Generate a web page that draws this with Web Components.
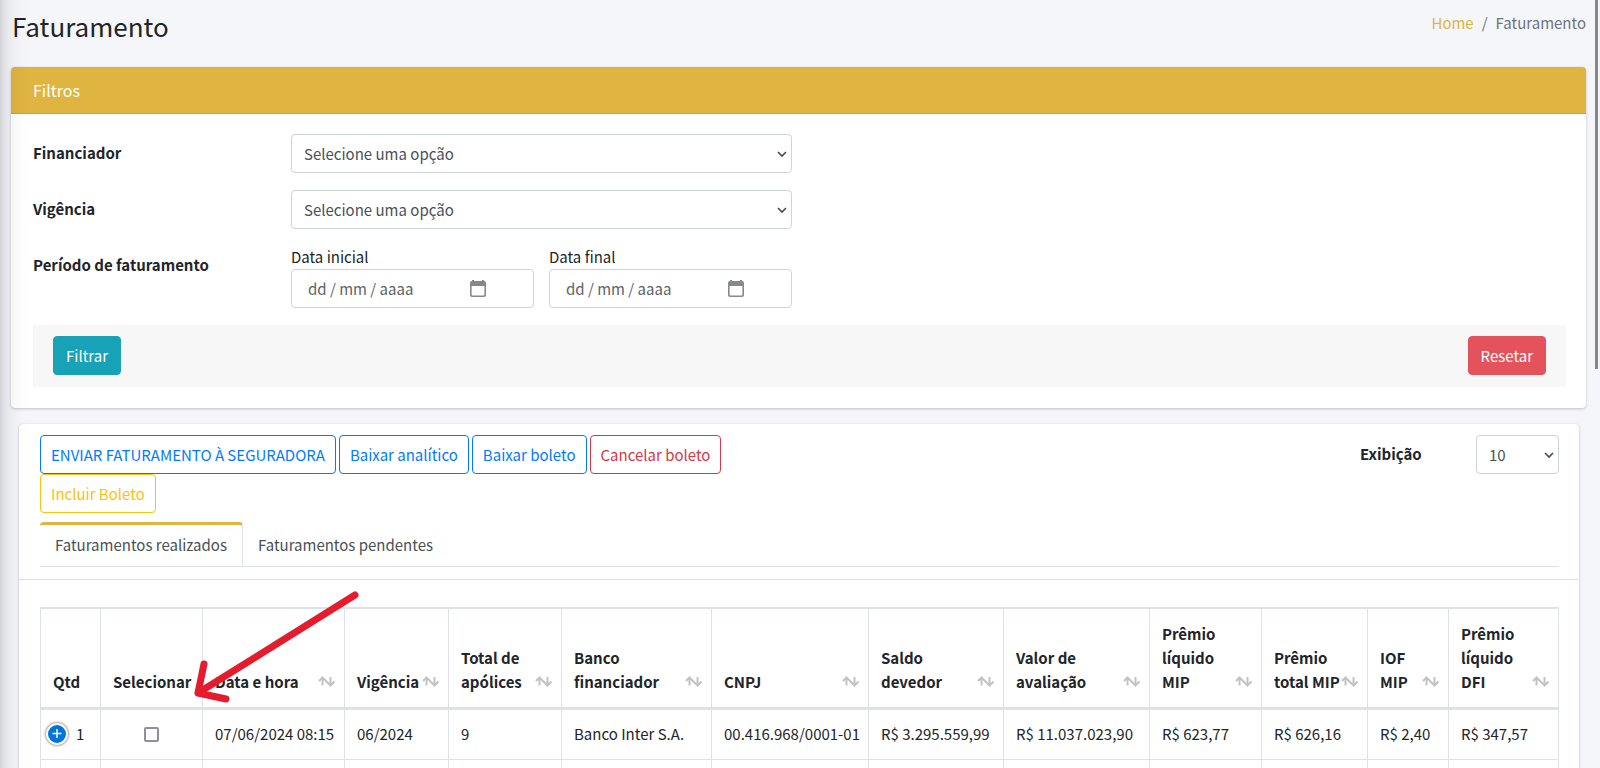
<!DOCTYPE html>
<html lang="pt-BR">
<head>
<meta charset="utf-8">
<title>Faturamento</title>
<style>
  html { scrollbar-width: none; }
  body {
    margin: 0;
    background: #f4f6f9;
    color: #212529;
    font-family: "Noto Sans CJK SC", "Noto Sans", sans-serif;
    font-size: 15px;
    line-height: 24px;
    overflow-x: hidden;
  }
</style>
</head>
<body>
<billing-page></billing-page>

<script>
  const define = (name, html, setup) => {
    const template = document.createElement('template');
    template.innerHTML = '<style>*,*::before,*::after{box-sizing:border-box}</style>' + html;
    customElements.define(name, class extends HTMLElement {
      connectedCallback() {
        if (this.shadowRoot) return;
        const root = this.attachShadow({ mode: 'open' });
        root.append(template.content.cloneNode(true));
        if (setup) setup(this, root);
      }
    });
  };

  /* Page heading with breadcrumb */
  define('page-header', `
    <style>
      :host { display: flex; justify-content: space-between; align-items: flex-start; padding: 6px 14px 21px 12px; }
      h1 { margin: 0; font-size: 26px; line-height: 40px; font-weight: 400; }
      ol { display: flex; margin: 0; padding: 5px 0 0; list-style: none; color: #6c757d; }
      li + li::before { content: "/"; padding: 0 8px; }
      a { color: #e0b440; text-decoration: none; }
    </style>
    <h1>Faturamento</h1>
    <nav aria-label="breadcrumb"><ol><li><a href="#home">Home</a></li><li>Faturamento</li></ol></nav>`);

  /* White raised panel */
  define('ui-card', `
    <style>
      :host { display: block; background: #fff; border-radius: 4px; box-shadow: 0 0 1px rgba(0,0,0,.13), 0 1px 3px rgba(0,0,0,.2); }
      ::slotted([slot=title]) { display: block; margin: 0; padding: 11px 22px 10px; border-bottom: 1px solid #caa23a; border-radius: 4px 4px 0 0; background: #e0b440; color: #fff; font-size: 16px; line-height: 25px; font-weight: 400; }
    </style>
    <slot name="title"></slot><slot></slot>`);

  /* Button variants */
  define('ui-button', `
    <style>
      :host { display: inline-block; --c: #007bff; }
      button { display: block; height: 39px; padding: 0 10px; border: 1px solid var(--c); border-radius: 4px; background: transparent; color: var(--c); font: inherit; white-space: nowrap; cursor: pointer; }
      :host([variant=danger]) { --c: #dc3545; }
      :host([variant=warning]) { --c: #ffc107; }
      :host([variant=info]) { --c: #17a2b8; }
      :host([variant=reset]) { --c: #e4535b; }
      :host([solid]) button { padding: 0 12px; background: var(--c); color: #fff; }
    </style>
    <button type="button"><slot></slot></button>`);

  /* Drop-down with its label */
  define('select-field', `
    <style>
      :host { display: grid; grid-template-columns: 2fr 4fr 6fr; }
      :host([compact]) { grid-template-columns: 116px 83px; }
      label { padding-top: 7px; font-weight: 700; }
      .box { display: grid; align-items: center; margin-right: 15px; }
      :host([compact]) .box { margin-right: 0; }
      select, svg { grid-area: 1 / 1; }
      select { appearance: none; width: 100%; height: 39px; padding: 0 12px; border: 1px solid #ced4da; border-radius: 4px; background: #fff; color: #495057; font: inherit; }
      svg { justify-self: end; margin-right: 5px; pointer-events: none; }
    </style>
    <label for="s"></label>
    <div class="box">
      <select id="s"><option></option></select>
      <svg width="10" height="8" viewBox="0 0 10 8" fill="none" stroke="#495057" stroke-width="1.700"><path d="M1 2 5 6 9 2"/></svg>
    </div>`, (el, root) => {
      root.querySelector('label').textContent = el.getAttribute('label');
      root.querySelector('option').textContent = el.getAttribute('value');
    });

  /* Date box with calendar glyph */
  define('date-field', `
    <style>
      :host { display: block; flex: 1; min-width: 0; }
      label { display: block; }
      .box { display: flex; align-items: center; height: 39px; padding: 0 46px 0 16px; border: 1px solid #ced4da; border-radius: 4px; }
      input { flex: 1; min-width: 0; padding: 0; border: 0; outline: 0; background: none; color: #495057; font: inherit; }
      input::placeholder { color: #5c636a; opacity: 1; }
      svg { display: block; }
    </style>
    <label for="d"><slot></slot></label>
    <div class="box">
      <input id="d" type="text" placeholder="dd / mm / aaaa">
      <svg width="18" height="18" viewBox="0 0 18 18"><path fill="#85898d" fill-rule="evenodd" d="M3 0h2v1h8V0h2v1a2 2 0 0 1 2 2v12a2 2 0 0 1-2 2H3a2 2 0 0 1-2-2V3a2 2 0 0 1 2-2zM2.600 6v8.400a1 1 0 0 0 1 1h10.800a1 1 0 0 0 1-1V6z"/></svg>
    </div>`);

  /* Filter form */
  define('filter-panel', `
    <style>
      :host { display: block; padding: 20px 20px 21px 22px; }
      form { display: grid; gap: 17px; }
      select-field, .period { margin-right: -15px; }
      .period { display: grid; grid-template-columns: minmax(0, 2fr) minmax(0, 4fr) minmax(0, 6fr); margin-top: -1px; }
      .period > b { padding-top: 8px; }
      .dates { display: flex; gap: 15px; margin-right: 15px; }
      .actions { display: flex; justify-content: space-between; padding: 11px 20px 12px; background: #f7f7f7; }
    </style>
    <form>
      <select-field label="Financiador" value="Selecione uma opção"></select-field>
      <select-field label="Vigência" value="Selecione uma opção"></select-field>
      <div class="period" role="group" aria-label="Período de faturamento">
        <b>Período de faturamento</b>
        <div class="dates"><date-field>Data inicial</date-field><date-field>Data final</date-field></div>
      </div>
      <div class="actions"><ui-button variant="info" solid>Filtrar</ui-button><ui-button variant="reset" solid>Resetar</ui-button></div>
    </form>`);

  /* Batch actions */
  define('billing-toolbar', `
    <style>
      :host { display: flex; justify-content: space-between; align-items: flex-start; padding: 11px 20px 0 21px; }
      .buttons { display: flex; flex-wrap: wrap; column-gap: 3px; width: 50%; }
    </style>
    <div class="buttons">
      <ui-button>ENVIAR FATURAMENTO À SEGURADORA</ui-button>
      <ui-button>Baixar analítico</ui-button>
      <ui-button>Baixar boleto</ui-button>
      <ui-button variant="danger">Cancelar boleto</ui-button>
      <ui-button variant="warning">Incluir Boleto</ui-button>
    </div>
    <select-field compact label="Exibição" value="10"></select-field>`);

  define('billing-tabs', `
    <style>
      :host { display: block; padding: 9px 20px 12px 21px; border-bottom: 1px solid #dfe2e5; }
      nav { display: flex; border-bottom: 1px solid #dee2e6; }
      a { height: 44px; padding: 8px 15px 0; border-top: 3px solid transparent; color: #495057; text-decoration: none; }
      a[aria-current] { margin-bottom: -1px; border-top-color: #e0b440; border-right: 1px solid #dee2e6; border-radius: 4px 4px 0 0; background: #fff; }
    </style>
    <nav><a href="#realizados" aria-current="page">Faturamentos realizados</a><a href="#pendentes">Faturamentos pendentes</a></nav>`);

  define('sort-icon', `
    <style>:host { display: block; } svg { display: block; }</style>
    <svg width="17" height="11" viewBox="0 0 17 11" fill="none" stroke="#c3c3c4" stroke-width="2"><path d="M4.500 9.500V1.500M1 5l3.500-3.500L9.500 6.500M12.500 1v8M8.500 5.500l4 4 4-4"/></svg>`);

  /* Billing table */
  const columns = [
    ['Qtd', 60, '1'], ['Selecionar', 102, ''], ['Data e hora', 142, '07/06/2024 08:15'],
    ['Vigência', 104, '06/2024'], ['Total de<br>apólices', 113, '9'],
    ['Banco<br>financiador', 150, 'Banco Inter S.A.'], ['CNPJ', 157, '00.416.968/0001-01'],
    ['Saldo<br>devedor', 135, 'R$ 3.295.559,99'], ['Valor de<br>avaliação', 146, 'R$ 11.037.023,90'],
    ['Prêmio<br>líquido<br>MIP', 112, 'R$ 623,77'], ['Prêmio<br>total MIP', 106, 'R$ 626,16'],
    ['IOF<br>MIP', 81, 'R$ 2,40'], ['Prêmio<br>líquido<br>DFI', 110, 'R$ 347,57']
  ];
  const cell = ([, , value], i) =>
    i === 0 ? `<td><div class="count"><button type="button" aria-label="Expandir"><svg width="18" height="18" viewBox="0 0 18 18" stroke="#fff" stroke-width="1.500"><path d="M9 4v9M4.500 8.500h9"/></svg></button>${value}</div></td>`
    : i === 1 ? '<td><input type="checkbox" aria-label="Selecionar"></td>'
    : `<td>${value}</td>`;
  define('billing-table', `
    <style>
      :host { display: block; padding: 27px 20px 21px 21px; }
      table { width: 100%; table-layout: fixed; border-collapse: separate; border-spacing: 0; border: 1px solid #dee2e6; border-width: 1px 0 0 1px; }
      th, td { border: 0 solid #dee2e6; border-right-width: 1px; padding: 12px 0 13px 12px; text-align: left; white-space: nowrap; }
      th { border-top-width: 1px; border-bottom-width: 2px; vertical-align: bottom; font-weight: 700; padding-top: 13px; }
      td { height: 50px; border-top-width: 1px; }
      .head { display: flex; align-items: flex-end; justify-content: space-between; padding-right: 9px; }
      sort-icon { margin-bottom: 7px; }
      .count { display: flex; align-items: center; gap: 8px; margin-left: -7px; }
      button { width: 22px; height: 22px; padding: 0; border: 2px solid #fff; border-radius: 50%; background: #0275d8; box-shadow: 0 0 3px #444; }
      button svg { display: block; }
      input { appearance: none; display: block; width: 15px; height: 15px; margin: 0 auto; border: 2px solid #8f8f9d; border-radius: 2px; background: #fff; }
      td:nth-child(2) { padding-left: 0; }
    </style>
    <table>
      <colgroup>${columns.map(c => `<col style="width:${c[1]}px">`).join('')}</colgroup>
      <thead><tr>${columns.map((c, i) => `<th scope="col"><div class="head"><span>${c[0]}</span>${i > 1 ? '<sort-icon></sort-icon>' : ''}</div></th>`).join('')}</tr></thead>
      <tbody><tr>${columns.map(cell).join('')}</tr><tr>${'<td></td>'.repeat(columns.length)}</tr></tbody>
    </table>`);

  /* Red pointer drawn over the table heading */
  define('pointer-arrow', `
    <style>:host { display: block; pointer-events: none; } svg { display: block; }</style>
    <svg width="170" height="120" viewBox="0 0 170 120" fill="none" stroke="#e51c2e" stroke-width="7" stroke-linecap="round" stroke-linejoin="round"><path d="M164 6 7 104M13 75 7 104 35 110"/></svg>`);

  define('billing-page', `
    <style>
      :host { display: block; position: relative; height: 100vh; overflow: hidden; }
      main { padding: 0 14px 0 11px; }
      .results { margin: 16px 7px 0 8px; }
      .table-area { position: relative; }
      pointer-arrow { position: absolute; left: 172px; top: 9px; }
      .edge { position: absolute; inset: -60px auto -60px -254px; width: 250px; box-shadow: 0 14px 28px rgba(0,0,0,.25), 0 10px 10px rgba(0,0,0,.22); pointer-events: none; }
      .thumb { position: absolute; top: 0; right: 2px; width: 3px; height: 48%; background: #888; }
    </style>
    <page-header></page-header>
    <main>
      <ui-card><h2 slot="title">Filtros</h2><filter-panel></filter-panel></ui-card>
      <ui-card class="results">
        <billing-toolbar></billing-toolbar>
        <billing-tabs></billing-tabs>
        <div class="table-area"><billing-table></billing-table><pointer-arrow></pointer-arrow></div>
      </ui-card>
    </main>
    <div class="edge"></div>
    <div class="thumb"></div>`);
</script>
</body>
</html>
